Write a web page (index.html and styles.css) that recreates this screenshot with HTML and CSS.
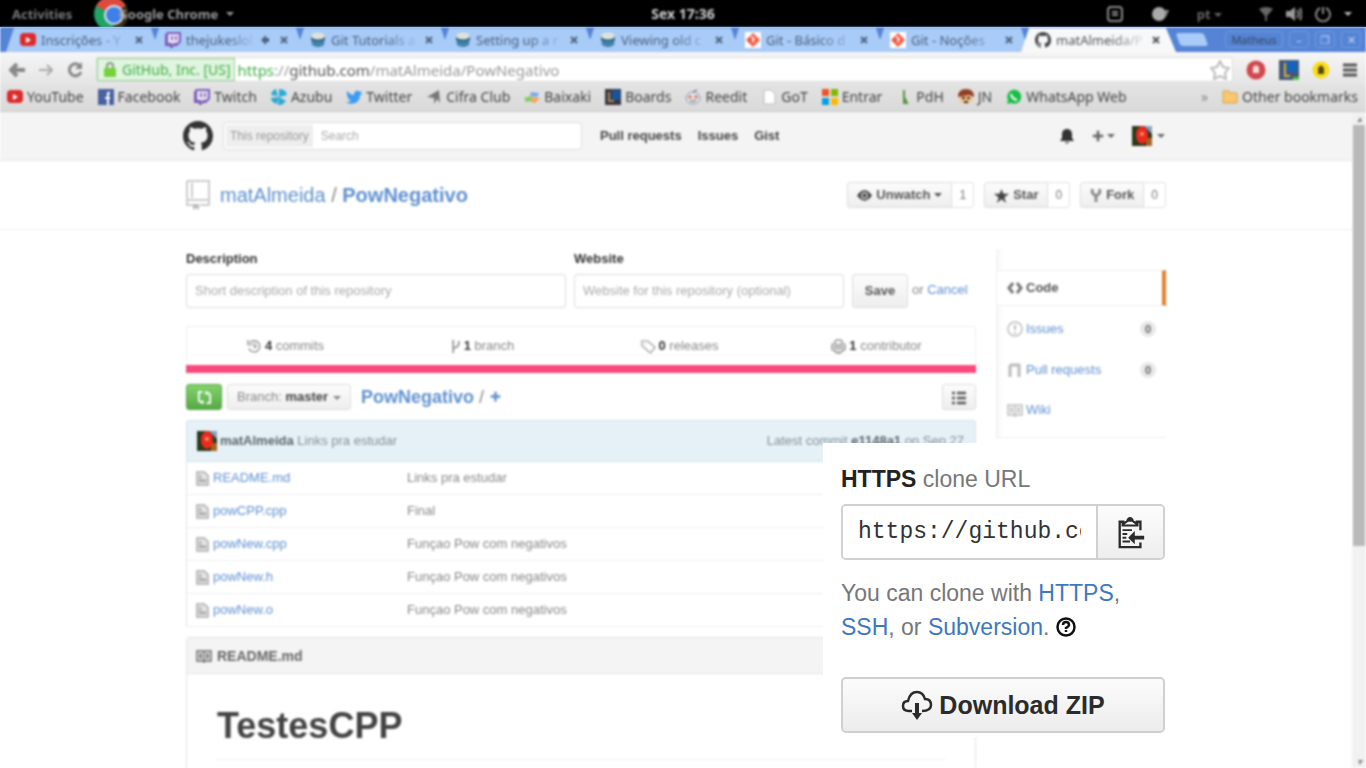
FILE: index.html
```html
<!DOCTYPE html>
<html lang="pt-BR">
<head>
<meta charset="utf-8">
<title>matAlmeida/PowNegativo</title>
<link rel="stylesheet" href="styles.css">
</head>
<body>
<svg class="defs" aria-hidden="true">
  <symbol id="yt" viewBox="0 0 16 16"><rect y="1" width="16" height="13" rx="4" fill="#dc2a2c"/><path d="M6 5l5 3-5 3z" fill="#fff"/></symbol>
  <symbol id="twitch" viewBox="0 0 16 16"><path d="M2 0h14v10l-4 4H9l-2 2H5v-2H0V3z" fill="#7b5cb8"/><path d="M3 2h11v7l-2 2H9l-2 2v-2H3z" fill="#e6dff3"/><path d="M7 4v4M11 4v4" stroke="#7b5cb8" stroke-width="1.6"/></symbol>
  <symbol id="bucket" viewBox="0 0 16 16"><path d="M1 3h14l-1 10q-6 4-12 0z" fill="#3f83ab"/><path d="M1 5q7 4 14 0v3q-7 3-14 0z" fill="#345f80"/><ellipse cx="8" cy="4" rx="7" ry="3.5" fill="#dce3dd"/></symbol>
  <symbol id="git" viewBox="0 0 16 16"><path fill="#fff" d="M0 0h16v16H0z"/><path d="M8 1l7 7-7 7-7-7z" fill="#f0583f"/><path d="M6 4l4 4M8 6v5" stroke="#fff" stroke-width="1.3"/></symbol>
  <symbol id="github" viewBox="0 0 16 16"><path fill-rule="evenodd" d="M8 0C3.58 0 0 3.58 0 8c0 3.54 2.29 6.53 5.47 7.59.4.07.55-.17.55-.38v-1.49c-2.01.37-2.53-.49-2.69-.94-.09-.23-.48-.94-.82-1.13-.28-.15-.68-.52-.01-.53.63-.01 1.08.58 1.23.82.72 1.21 1.87.87 2.33.66.07-.52.28-.87.51-1.07-1.78-.2-3.64-.89-3.64-3.95 0-.87.31-1.59.82-2.15-.08-.2-.36-1.02.08-2.12 0 0 .67-.21 2.2.82A7.6 7.6 0 0 1 8 3.87c.68 0 1.36.09 2 .27 1.53-1.04 2.2-.82 2.2-.82.44 1.1.16 1.92.08 2.12.51.56.82 1.27.82 2.15 0 3.07-1.87 3.75-3.65 3.95.29.25.54.73.54 1.48v2.2c0 .21.15.46.55.38A8.01 8.01 0 0 0 16 8c0-4.42-3.58-8-8-8z"/></symbol>
  <symbol id="avatar" viewBox="0 0 20 20"><path fill="#28391c" d="M0 0h20v20H0z"/><path d="M12 0h8v8z" fill="#8aa2c8"/><path d="M14 12h6v8h-6z" fill="#a56425"/><ellipse cx="10" cy="9" rx="6" ry="9" fill="#ed2b1c"/><circle cx="10" cy="8" r="2" fill="#f58d7e"/></symbol>
  <symbol id="book" viewBox="0 0 16 16"><path fill="none" stroke="currentColor" stroke-width="1.5" d="M1 3h6l1 1 1-1h6v10H9l-1 1-1-1H1zM8 4v9M3 6h3M3 8h3M3 10h3M10 6h3M10 8h3M10 10h3"/></symbol>
  <symbol id="file" viewBox="0 0 16 16"><path fill="#e4e4e4" stroke="currentColor" stroke-width="1.5" d="M2 1h8l4 4v10H2zM4 5h3M4 7.500h3"/><path d="M4 9h8v3H4z" fill="currentColor"/></symbol>
  <symbol id="pull" viewBox="0 0 16 16"><path fill="none" stroke="currentColor" stroke-width="3" d="M3 15V3M7 3h5v12M3 3h5"/></symbol>
  <symbol id="plus" viewBox="0 0 16 16"><path d="M8 2v12M2 8h12" stroke="currentColor" stroke-width="3"/></symbol>
  <symbol id="close" viewBox="0 0 8 8"><path d="M1 1l6 6M7 1L1 7" stroke="currentColor" stroke-width="2"/></symbol>
</svg>

<div class="system-bar">
  <span class="activities">Activities</span>
  <span class="app-menu"><svg width="34" height="34" viewBox="0 0 34 34"><circle cx="17" cy="17" r="17" fill="#1fa463"/><path d="M2 9A17 17 0 0 1 32 9L17 17z" fill="#dd4b3e"/><path d="M32 9a17 17 0 0 1-12 25l-3-17z" fill="#3a2c0a"/><circle cx="20" cy="18" r="10" fill="#dfe9fb"/><circle cx="20" cy="18" r="8" fill="#3f7fe8"/></svg><span>Google Chrome</span><i class="caret"></i></span>
  <time>Sex 17:36</time>
  <span class="status">
    <svg width="16" height="16" viewBox="0 0 16 16"><rect x="1" y="1" width="14" height="14" rx="3" fill="none" stroke="#888" stroke-width="2"/><path d="M5 6h6M5 9h6" stroke="#888" stroke-width="2"/></svg>
    <svg width="18" height="16" viewBox="0 0 18 16"><circle cx="8" cy="8" r="7" fill="#aaa"/><path d="M13 4h5l-3 7z" fill="#888"/></svg>
    <span class="lang">pt <i class="caret"></i></span>
    <svg width="14" height="14" viewBox="0 0 14 14"><path d="M0 2q7-4 14 0L8 9v5H6V9z" fill="#666"/></svg>
    <svg width="16" height="14" viewBox="0 0 16 14"><path d="M0 4h4l5-4v14l-5-4H0z" fill="#999"/><path d="M11 3q3 4 0 8M14 1q3 6 0 12" fill="none" stroke="#888" stroke-width="2"/></svg>
    <svg width="16" height="16" viewBox="0 0 16 16"><path d="M5 2a7 7 0 1 0 6 0M8 1v7" fill="none" stroke="#888" stroke-width="2"/></svg>
    <i class="caret"></i>
  </span>
</div>

<div class="browser">
  <div class="tab-strip">
    <div class="tab"><svg><use href="#yt"/></svg><span>Inscrições - Y</span><svg class="x"><use href="#close"/></svg></div>
    <div class="tab"><svg><use href="#twitch"/></svg><span>thejukeslol</span><svg class="sound" viewBox="0 0 10 10"><path d="M0 5l5-5v3h3v4H5v3z" fill="currentColor"/></svg><svg class="x"><use href="#close"/></svg></div>
    <div class="tab"><svg><use href="#bucket"/></svg><span>Git Tutorials a</span><svg class="x"><use href="#close"/></svg></div>
    <div class="tab"><svg><use href="#bucket"/></svg><span>Setting up a r</span><svg class="x"><use href="#close"/></svg></div>
    <div class="tab"><svg><use href="#bucket"/></svg><span>Viewing old c</span><svg class="x"><use href="#close"/></svg></div>
    <div class="tab"><svg><use href="#git"/></svg><span>Git - Básico d</span><svg class="x"><use href="#close"/></svg></div>
    <div class="tab"><svg><use href="#git"/></svg><span>Git - Noções</span><svg class="x"><use href="#close"/></svg></div>
    <div class="tab active"><svg><use href="#github"/></svg><span>matAlmeida/P</span><svg class="x"><use href="#close"/></svg></div>
    <div class="new-tab"></div>
    <div class="window-buttons"><button class="user">Matheus</button><button aria-label="Minimize">–</button><button aria-label="Restore">❐</button><button aria-label="Close">✕</button></div>
  </div>
  <div class="toolbar">
    <button class="nav" aria-label="Back"><svg viewBox="0 0 16 16"><path d="M8 2L2 8l6 6M2 8h14" fill="none" stroke="#888" stroke-width="4"/></svg></button>
    <button class="nav" aria-label="Forward"><svg viewBox="0 0 16 16"><path d="M9 3l5 5-5 5M14 8H1" fill="none" stroke="#aaa" stroke-width="2"/></svg></button>
    <button class="nav" aria-label="Reload"><svg viewBox="0 0 16 16"><path d="M13 4a6 6 0 1 0 1 6" fill="none" stroke="#888" stroke-width="3"/><path d="M15 0v7H8z" fill="#888"/></svg></button>
    <div class="address">
      <span class="site"><svg width="12" height="15" viewBox="0 0 12 15"><path d="M3 7V4a3 3 0 0 1 6 0v3" fill="none" stroke="#8b9a88" stroke-width="2"/><rect y="6" width="12" height="9" rx="1" fill="#77d13c"/></svg>GitHub, Inc. [US]</span>
      <span class="url"><span class="scheme">https</span>://<b>github.com</b>/matAlmeida/PowNegativo</span>
      <svg width="20" height="20" viewBox="0 0 20 20"><path d="M10 1l3 6 6 1-4 5 1 6-6-3-6 3 1-6-4-5 6-1z" fill="none" stroke="#bbb" stroke-width="2"/></svg>
    </div>
    <span class="extensions">
      <svg width="20" height="20" viewBox="0 0 20 20"><circle cx="10" cy="10" r="9.500" fill="#d2484d"/><path d="M7 7l3-2 3 2v6H7z" fill="#f6dcdc"/></svg>
      <svg width="20" height="20" viewBox="0 0 20 20"><path fill="#465674" d="M0 0h20v20H0z"/><path d="M8 1h10v11H8z" fill="#1563bd"/><path d="M6 3v13h5" stroke="#cbb34f" stroke-width="2" fill="none"/><path d="M14 17h6v3h-6z" fill="#48c73f"/></svg>
      <svg width="18" height="18" viewBox="0 0 18 18"><circle cx="9" cy="9" r="8.500" fill="#fbdc14"/><path d="M9 4l3 3v6H6V7z" fill="#554a12"/></svg>
      <svg width="14" height="14" viewBox="0 0 14 14"><path d="M0 2h14M0 7h14M0 12h14" stroke="#555" stroke-width="3"/></svg>
    </span>
  </div>
  <nav class="bookmarks" aria-label="Bookmarks">
    <a href="#"><svg><use href="#yt"/></svg>YouTube</a>
    <a href="#"><svg viewBox="0 0 16 16"><path fill="#4862a0" d="M0 0h16v16H0z"/><path d="M12 4h-2v12M7 9h5" stroke="#fff" stroke-width="2" fill="none"/></svg>Facebook</a>
    <a href="#"><svg><use href="#twitch"/></svg>Twitch</a>
    <a href="#"><svg viewBox="0 0 16 16"><path d="M8 8V0q7 0 8 6zM8 8l7 4q-4 5-8 4zM8 8l-2 7q-6-2-6-6zM7 7L0 6q1-5 5-6z" fill="#28a9d3"/></svg>Azubu</a>
    <a href="#"><svg viewBox="0 0 16 16"><path d="M0 13c2 0 4 0 5-2-2 0-3-1-3-2h1C1 8 1 7 1 5l1 1C0 4 1 3 1 2c2 2 4 4 7 4 0-5 4-5 6-3l2-1-1 2 1 1-2 1c0 8-8 11-14 7z" fill="#3b9cf0"/></svg>Twitter</a>
    <a href="#"><svg viewBox="0 0 16 16"><path d="M1 8L13 1l1 13-3-4-3 5V9z" fill="#777"/></svg>Cifra Club</a>
    <a href="#"><svg viewBox="0 0 16 16"><path d="M7 3l8 1-2 4-7-1z" fill="#77a8ed"/><path d="M0 9l7-2 1 5-6 1z" fill="#80ce61"/><path d="M7 8l9 1-5 5-4-1z" fill="#eea65d"/></svg>Baixaki</a>
    <a href="#"><svg viewBox="0 0 16 16"><path fill="#3b3542" d="M0 0h16v16H0z"/><path d="M7 1h8v10H7z" fill="#17549b"/><path d="M4 3v9h5" stroke="#a58c58" stroke-width="2" fill="none"/></svg>Boards</a>
    <a href="#"><svg viewBox="0 0 16 16"><ellipse cx="8" cy="9" rx="7" ry="6" fill="#e8e8e8" stroke="#7d9db8"/><circle cx="5" cy="8" r="2" fill="#d78c80"/><circle cx="11" cy="8" r="2" fill="#d78c80"/><path d="M5 12h6M8 3l4-2" stroke="#555"/></svg>Reedit</a>
    <a href="#"><svg viewBox="0 0 16 16"><path d="M3 1h7l4 4v10H3z" fill="#fff" stroke="#bbb"/></svg>GoT</a>
    <a href="#"><svg viewBox="0 0 16 16"><path d="M0 0h7v7H0z" fill="#f05125"/><path d="M9 0h7v7H9z" fill="#7fba00"/><path d="M0 9h7v7H0z" fill="#009fe8"/><path d="M9 9h7v7H9z" fill="#ffb900"/></svg>Entrar</a>
    <a href="#"><svg viewBox="0 0 16 16"><path d="M8 1v7l3 6H8z" stroke="#579345" stroke-width="2" fill="#579345"/></svg>PdH</a>
    <a href="#"><svg viewBox="0 0 16 16"><circle cx="8" cy="8" r="7" fill="#efc693"/><path d="M0 8Q0 0 8 0t8 8l-5-2-5 1z" fill="#923f26"/><path d="M4 9h3M9 9h3M6 13h4" stroke="#4c281c" stroke-width="2"/></svg>JN</a>
    <a href="#"><svg viewBox="0 0 16 16"><path d="M1 15l1-4A7 7 0 1 1 5 14z" fill="#18bd47"/><path d="M5 5q1 5 6 6" stroke="#fff" stroke-width="2" fill="none"/></svg>WhatsApp Web</a>
    <span class="more">»</span>
    <a class="other" href="#"><svg viewBox="0 0 16 16"><path d="M1 2h6l1 2h7v10H1z" fill="#fac66e" stroke="#dda548"/></svg>Other bookmarks</a>
  </nav>

  <div class="viewport">
    <div class="page">
      <header class="site-header"><div class="container header-row">
        <svg class="mark"><use href="#github"/></svg>
        <label class="search"><span>This repository</span><input placeholder="Search"></label>
        <nav class="site-nav"><a href="#">Pull requests</a><a href="#">Issues</a><a href="#">Gist</a></nav>
        <span class="user-nav">
          <svg width="14" height="16" viewBox="0 0 14 16"><path d="M0 13l2-3V6q0-4 4-5h2q4 1 4 5v4l2 3zM5 14h4q-2 3-4 0z" fill="#333"/></svg>
          <span><svg width="14" height="14"><use href="#plus"/></svg><i class="caret"></i></span>
          <span class="account"><svg width="20" height="20"><use href="#avatar"/></svg><i class="caret"></i></span>
        </span>
      </div></header>
      <div class="repo-head"><div class="container repo-row">
        <svg class="repo-icon" viewBox="0 0 24 30"><path d="M1 1h22v24H14M7 25H1V1M2 20h20M6 3v15" fill="none" stroke="#ccc" stroke-width="2"/><path d="M7 24h6v6l-3-2-3 2z" fill="#bbb"/></svg>
        <h1><a href="#">matAlmeida</a> / <a href="#"><b>PowNegativo</b></a></h1>
        <div class="actions">
          <div class="pair"><button><svg viewBox="0 0 16 16"><path d="M0 8q8-11 16 0-8 11-16 0z" fill="#444"/><circle cx="8" cy="8" r="3" fill="none" stroke="#ccc" stroke-width="1.500"/></svg>Unwatch<i class="caret"></i></button><a href="#">1</a></div>
          <div class="pair"><button><svg viewBox="0 0 16 16"><path d="M8 1l2 5h6l-5 4 2 6-5-4-5 4 2-6-5-4h6z" fill="#444"/></svg>Star</button><a href="#">0</a></div>
          <div class="pair"><button><svg class="fork" viewBox="0 0 12 16"><path d="M2 1v4l4 4 4-4V1M6 8v7" fill="none" stroke="#888" stroke-width="3"/></svg>Fork</button><a href="#">0</a></div>
        </div>
      </div></div>
      <div class="container columns">
        <main>
          <form class="meta">
            <div class="field description"><label for="d">Description</label><input id="d" placeholder="Short description of this repository"></div>
            <div class="field website"><label for="w">Website</label><input id="w" placeholder="Website for this repository (optional)"></div>
            <button class="save" type="button">Save</button><span class="or">or <a href="#">Cancel</a></span>
          </form>
          <div class="stats">
            <a href="#"><svg viewBox="0 0 16 16"><path d="M3 4a6 6 0 1 1-1 6M1 1v5h5M8 4v5l3-2" fill="none" stroke="#999" stroke-width="1.500"/></svg><span><b>4</b> commits</span></a>
            <a href="#"><svg class="slim" viewBox="0 0 10 16"><path d="M2 1v14M8 2v3q0 3-6 5" fill="none" stroke="#999" stroke-width="2"/></svg><span><b>1</b> branch</span></a>
            <a href="#"><svg viewBox="0 0 16 16"><path d="M1 2h6l8 7-5 6-9-8zM4 5h1" fill="none" stroke="#aaa" stroke-width="1.500"/></svg><span><b>0</b> releases</span></a>
            <a href="#"><svg viewBox="0 0 16 16"><path d="M5 1h6v5h4v6h-4v3H5v-3H1V6h4zM5 6h6M5 6v6M11 6v6M8 6v9M2 9h12" fill="none" stroke="#888"/><circle cx="8" cy="8" r="7" fill="none" stroke="#999"/></svg><span><b>1</b> contributor</span></a>
          </div>
          <div class="language"></div>
          <div class="file-nav">
            <button class="compare" aria-label="Compare"><svg viewBox="0 0 16 16"><path d="M6 2H2v9q0 2 4 2M10 3q4 0 4 3v8h-4M6 11v4M10 1v4" fill="none" stroke="#fff" stroke-width="2"/></svg></button>
            <button class="branch">Branch: <b>master</b><i class="caret"></i></button>
            <span class="crumb"><a href="#"><b>PowNegativo</b></a> / <a href="#" aria-label="New file"><svg width="13" height="13"><use href="#plus"/></svg></a></span>
            <button class="list" aria-label="Find file"><svg viewBox="0 0 14 14"><path d="M5 2h9M5 7h9M5 12h9M0 2h3M0 7h3M0 12h3" stroke="#555" stroke-width="2.500"/></svg></button>
          </div>
          <div class="commit"><svg width="20" height="20"><use href="#avatar"/></svg><span><b>matAlmeida</b> Links pra estudar</span><span class="latest">Latest commit <b>e1148a1</b> on Sep 27</span></div>
          <table class="files"><tbody>
            <tr><td><svg><use href="#file"/></svg><a href="#">README.md</a></td><td>Links pra estudar</td></tr>
            <tr><td><svg><use href="#file"/></svg><a href="#">powCPP.cpp</a></td><td>Final</td></tr>
            <tr><td><svg><use href="#file"/></svg><a href="#">powNew.cpp</a></td><td>Funçao Pow com negativos</td></tr>
            <tr><td><svg><use href="#file"/></svg><a href="#">powNew.h</a></td><td>Funçao Pow com negativos</td></tr>
            <tr><td><svg><use href="#file"/></svg><a href="#">powNew.o</a></td><td>Funçao Pow com negativos</td></tr>
          </tbody></table>
          <section class="readme"><h3><svg><use href="#book"/></svg>README.md</h3><article><h2>TestesCPP</h2></article></section>
        </main>
        <aside>
          <a class="current" href="#"><svg viewBox="0 0 16 16"><path d="M6 3L2 8l4 5M10 3l4 5-4 5" fill="none" stroke="#777" stroke-width="3"/></svg>Code</a>
          <a href="#"><svg viewBox="0 0 16 16"><circle cx="8" cy="8" r="7" fill="none" stroke="currentColor" stroke-width="1.500"/><path d="M8 4v5M8 11v2" stroke="currentColor" stroke-width="2"/></svg><span>Issues</span><em>0</em></a>
          <a href="#"><svg><use href="#pull"/></svg><span>Pull requests</span><em>0</em></a>
          <a href="#"><svg><use href="#book"/></svg><span>Wiki</span></a>
        </aside>
      </div>
    </div>
    <div class="scrollbar"><i>▴</i><div></div><i>▾</i></div>
  </div>
</div>

<section class="clone-panel">
  <label class="clone-title" for="clone"><b>HTTPS</b> clone URL</label>
  <div class="clone-box"><input id="clone" value="https://github.com/matAlmeida/PowNegativo.git" readonly><button aria-label="Copy to clipboard"><svg width="28" height="32" viewBox="0 0 28 34"><path d="M7 5H2v27h22v-5M24 14V5h-5" fill="none" stroke="#2b2b2b" stroke-width="2.500"/><path d="M4 10V6l5-2q1-4 4-4t4 4l5 2v4z" fill="#2b2b2b"/><path d="M7 8h12l-4-3h-4z" fill="#fff"/><path d="M5 14h10M5 18h5M5 22h4M5 26h8" stroke="#2b2b2b" stroke-width="2"/><path d="M11 22l7-7v5h10v4H18v5z" fill="#2b2b2b"/></svg></button></div>
  <p>You can clone with <a href="#">HTTPS</a>, <a href="#">SSH</a>, or <a href="#">Subversion</a>. <svg width="20" height="20" viewBox="0 0 20 20"><circle cx="10" cy="10" r="8.500" fill="none" stroke="#111" stroke-width="2.500"/><path d="M7 8q0-3 3-3t3 3q0 1-3 3v1M10 13v2" fill="none" stroke="#111" stroke-width="2.500"/></svg></p>
  <button class="download"><svg width="32" height="30" viewBox="0 0 32 30"><path d="M11 21H8q-6 0-6-5 0-5 5-5 2-9 9-9 6 0 8 7 6 0 6 6 0 6-9 6" fill="none" stroke="#2b2b2b" stroke-width="2.500"/><path d="M14 13h4v10h3l-5 7-5-7h3z" fill="#2b2b2b"/></svg>Download ZIP</button>
</section>
</body>
</html>
```
FILE: styles.css
```css
* { box-sizing: border-box; }
body { margin: 0; height: 100vh; position: relative; overflow: hidden; display: flex; flex-direction: column; font: 13px/20px "Liberation Sans", Arial, sans-serif; color: #888; background: #fff; }
a { color: #5f90d0; text-decoration: none; }
button, input { font: inherit; color: inherit; margin: 0; }
svg { flex: none; }
.defs { position: absolute; width: 0; height: 0; }
.caret { display: inline-block; border: 4px solid transparent; border-top-color: currentColor; border-bottom: 0; vertical-align: middle; }

.system-bar { flex: none; height: 27px; background: #000; color: #bbb; display: flex; align-items: center; padding: 0 14px 0 12px; font: bold 14px/20px "Noto Sans", sans-serif; position: relative; overflow: hidden; }
.system-bar > * { filter: blur(1px); }
.activities { color: #777; font-size: 13px; }
.app-menu { display: flex; align-items: center; margin-left: 22px; color: #999; font-size: 13px; }
.app-menu > span { margin: 0 8px 0 -10px; }
.system-bar time { position: absolute; left: 0; right: 0; text-align: center; color: #ccc; }
.status { margin-left: auto; display: flex; align-items: center; }
.status > * { margin-left: 13px; }
.status > :nth-child(2) { margin-left: 28px; }
.status > :nth-child(3) { margin: 0 24px 0 28px; color: #666; font-size: 13px; }

.browser { flex: 1; min-height: 0; display: flex; flex-direction: column; filter: blur(1px); }
.tab-strip { flex: none; height: 25px; background: #5584d6; display: flex; padding-left: 6px; font: 13px/20px "Noto Sans", sans-serif; color: #4b6180; }
.tab { flex: 0 1 153px; min-width: 0; height: 25px; margin-right: -8px; padding: 1px 16px 0 14px; display: flex; align-items: center; gap: 5px; background: #a8cbf7; clip-path: polygon(8px 1px, 145px 1px, 100% 100%, 0 100%); }
.tab svg { width: 16px; height: 16px; }
.tab span { flex: 1; white-space: nowrap; -webkit-mask-image: linear-gradient(to right, #000 60%, transparent); mask-image: linear-gradient(to right, #000 60%, transparent); }
.tab .x { width: 8px; height: 8px; }
.tab .sound { width: 10px; height: 10px; margin-right: 4px; }
.tab.active { background: #f7f8f9; color: #555; fill: #444; flex-basis: 155px; }
.new-tab { width: 28px; height: 13px; margin: 6px 0 0 10px; background: #a8cbf7; border-radius: 3px; transform: skewX(20deg); }
.window-buttons { margin-left: auto; display: flex; gap: 6px; padding: 4px 5px 4px 0; }
.window-buttons button { border: 1px solid #7399d8; border-radius: 3px; background: none; color: #c7d8f5; width: 20px; padding: 0; font-size: 11px; line-height: 14px; }
.window-buttons .user { width: 58px; color: #3a4658; }

.toolbar { flex: none; height: 34px; display: flex; align-items: center; gap: 13px; padding: 1px 9px 0; background: linear-gradient(#f6f6f6, #e4e4e4); font: 14px/20px "Noto Sans", sans-serif; }
.nav { border: 0; background: none; padding: 0; width: 16px; height: 16px; }
.nav svg { width: 16px; height: 16px; display: block; }
.address { flex: 1; height: 25px; background: #fff; display: flex; align-items: center; gap: 3px; border: 1px solid #ddd; border-radius: 2px; padding-right: 2px; }
.site { display: flex; align-items: center; gap: 6px; height: 23px; padding: 0 3px 0 6px; border: 1px solid #9bcf9b; background: #e0f4df; color: #3fae46; }
.url { flex: 1; color: #999; font-size: 15px; }
.url b { font-weight: normal; color: #555; }
.url .scheme { color: #3fae46; }
.extensions { display: flex; align-items: center; gap: 13px; }
.bookmarks { flex: none; height: 26px; display: flex; align-items: center; gap: 14px; padding: 0 8px 3px 7px; background: linear-gradient(#e2e2e2, #dadada); border-bottom: 1px solid #c9c9c9; font: 14px/20px "Noto Sans", sans-serif; white-space: nowrap; }
.bookmarks a { display: flex; align-items: center; gap: 4px; color: #444; }
.bookmarks svg { width: 16px; height: 16px; }
.more { margin-left: auto; }

.viewport { flex: 1; min-height: 0; display: flex; background: #fff; }
.page { flex: 1; min-width: 0; overflow: hidden; }
.container { width: 980px; max-width: 100%; margin: 0 auto; }
.site-header { height: 49px; background: #f4f4f4; border-bottom: 1px solid #e8e8e8; }
.header-row { display: flex; align-items: center; height: 48px; }
.mark { width: 30px; height: 30px; fill: #333; margin: 0 10px 0 -3px; }
.search { display: flex; width: 359px; height: 28px; background: #fff; border: 1px solid #ddd; border-radius: 3px; padding: 2px; }
.search span { background: #eee; padding: 1px 4px; color: #999; white-space: nowrap; }
.search input { border: 0; min-width: 0; flex: 1; padding: 0 8px; background: none; }
.search, .search input { font-size: 12px; }
::placeholder { color: #aaa; opacity: 1; }
.site-nav { display: flex; gap: 16px; margin-left: 18px; font-weight: bold; }
.site-nav a { color: #444; }
.user-nav { margin-left: auto; display: flex; align-items: center; gap: 17px; color: #666; padding-right: 1px; }
.user-nav span { display: flex; align-items: center; gap: 2px; }
.user-nav .account { gap: 5px; }
.repo-head { border-bottom: 1px solid #eee; height: 69px; }
.repo-row { display: flex; align-items: center; height: 68px; }
.repo-icon { width: 24px; height: 30px; }
h1 { font-size: 20px; line-height: 28px; font-weight: normal; margin: 0 0 0 10px; }
.actions { margin-left: auto; display: flex; gap: 10px; font-size: 12px; }
.pair { display: flex; height: 26px; }
.pair button, .save, .branch, .list { border: 1px solid #ddd; border-radius: 3px; background: linear-gradient(#fcfcfc, #eee); color: #555; font-weight: bold; }
.pair button { display: flex; align-items: center; gap: 4px; padding: 0 9px; border-radius: 3px 0 0 3px; font-size: 13px; }
.pair svg { width: 15px; height: 15px; }
.pair .fork { width: 12px; }
.pair a { color: #777; border: 1px solid #e2e2e2; border-left: 0; border-radius: 0 3px 3px 0; padding: 2px 7px; }
.columns { display: flex; gap: 20px; padding-top: 19px; }
main { flex: 1; min-width: 0; }
.meta { display: flex; align-items: flex-end; gap: 8px; }
.field label { display: block; color: #333; font-weight: bold; line-height: 20px; margin-bottom: 5px; }
.field input { display: block; width: 100%; height: 34px; border: 1px solid #ddd; border-radius: 3px; padding: 0 8px 2px; background: #fff; }
.description { flex: 380; }
.website { flex: 270; }
.save { width: 56px; height: 34px; }
.or { line-height: 32px; height: 34px; width: 64px; white-space: nowrap; margin-left: -4px; }
.stats { display: flex; height: 39px; margin-top: 18px; border: 1px solid #eee; border-bottom: 0; border-radius: 3px 3px 0 0; }
.stats a { flex: 1; display: flex; justify-content: center; align-items: center; gap: 3px; color: #888; }
.stats svg { width: 15px; height: 15px; }
.stats .slim { width: 10px; }
.stats b { color: #333; }
.language { height: 8px; background: #f8497c; }
.file-nav { display: flex; align-items: center; margin: 11px 0 10px; height: 26px; }
.file-nav button { height: 26px; }
.compare { width: 36px; border: 1px solid #58a54c; border-radius: 3px; background: linear-gradient(#83d36a, #55aa47); padding: 0; }
.compare svg { width: 15px; height: 15px; vertical-align: middle; }
.branch { margin-left: 5px; padding: 0 9px; font-weight: normal; color: #888; }
.branch b { color: #444; }
.branch .caret { margin-left: 5px; }
.crumb { margin-left: 10px; font-size: 18px; }
.list { margin-left: auto; width: 34px; padding: 0; }
.list svg { width: 14px; height: 14px; vertical-align: middle; }
.commit { display: flex; align-items: center; gap: 3px; height: 42px; padding: 0 11px 0 10px; background: #e5f1f6; border: 1px solid #d3e5ec; border-radius: 3px 3px 0 0; color: #849197; }
.commit b { color: #5c6568; }
.commit .latest { margin-left: auto; }
.files { width: 100%; table-layout: fixed; border-collapse: separate; border-spacing: 0; border: solid #e5e5e5; border-width: 0 1px; }
.files td { height: 33px; padding: 0; border-bottom: 1px solid #eee; }
.files td:first-child { width: 220px; padding-left: 8px; }
.files svg { width: 15px; height: 15px; color: #aaa; vertical-align: middle; margin-right: 3px; }
.readme { margin-top: 10px; height: 300px; border: 1px solid #e3e3e3; border-radius: 3px; }
h3 { display: flex; align-items: center; gap: 5px; margin: 0; height: 36px; padding-left: 9px; font-size: 14px; background: #f4f4f4; border-bottom: 1px solid #e3e3e3; color: #666; }
h3 svg { width: 16px; height: 16px; }
article { padding: 30px; }
h2 { margin: 0; color: #444; font-size: 36px; line-height: 44px; padding-bottom: 11px; border-bottom: 1px solid #eee; }
aside { width: 170px; padding-top: 21px; background: linear-gradient(to right, #f6f6f6, transparent 6px) no-repeat; border-left: 1px solid #f0f0f0; align-self: flex-start; }
aside a { display: flex; align-items: center; gap: 3px; height: 41px; padding: 0 10px; }
aside svg { width: 16px; height: 16px; color: #bbb; }
aside .current { height: 36px; margin-bottom: 2px; background: #fff; color: #555; font-weight: bold; border: solid #eee; border-width: 1px 0; border-right: 4px solid #df812e; }
aside em { margin-left: auto; font: bold 11px/16px "Liberation Sans", sans-serif; color: #666; background: #e8e8e8; border-radius: 8px; padding: 0 5px; }
aside a:last-child { height: 48px; padding-bottom: 7px; border-bottom: 1px solid #eee; }
.scrollbar { width: 14px; background: #f1f1f1; display: flex; flex-direction: column; font-size: 10px; line-height: 13px; text-align: center; }
.scrollbar div { height: 421px; background: #b9b9b9; margin: 0 1px auto; }

.clone-panel { position: absolute; left: calc(50% + 140px); top: 443px; width: 344px; padding: 19px 2px 4px 18px; background: #fff; font: 23px/34px "Liberation Sans", Arial, sans-serif; color: #777; }
.clone-panel a { color: #4078c0; }
.clone-title { display: block; }
.clone-title b { color: #222; }
.clone-box { display: flex; height: 56px; margin: 8px 0 16px; border: 2px solid #d0d0d0; border-radius: 5px; overflow: hidden; }
.clone-box input { flex: 1; min-width: 0; border: 0; padding: 0 15px; font: 23px/32px "Liberation Mono", monospace; color: #333; background: #fff; }
.clone-box button { width: 67px; border: 0; border-left: 2px solid #d0d0d0; background: linear-gradient(#fcfcfc, #eee); padding: 0; }
.clone-box svg { vertical-align: middle; }
.clone-panel p { margin: 0 0 33px; padding-right: 24px; }
.clone-panel p svg { vertical-align: -2px; }
.download { width: 100%; height: 56px; display: flex; align-items: center; justify-content: center; gap: 6px; border: 2px solid #d0d0d0; border-radius: 5px; background: linear-gradient(#fcfcfc, #ececec); font-size: 25px; font-weight: bold; color: #2b2b2b; }
```
